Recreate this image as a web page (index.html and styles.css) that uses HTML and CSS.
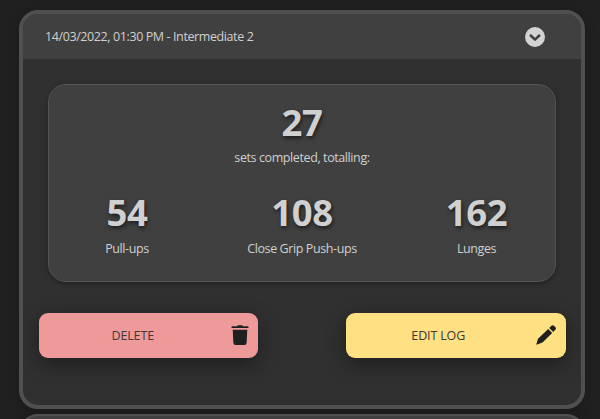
FILE: index.html
```html
<!DOCTYPE html>
<html lang="en">
<head>
<meta charset="utf-8">
<title>Workout log</title>
<link rel="stylesheet" href="styles.css">
</head>
<body>
<main class="logs">
  <article class="log">
    <header class="log-header">
      <span class="log-title">14/03/2022, 01:30 PM - Intermediate 2</span>
      <svg class="chevron" viewBox="0 0 20 20"><circle cx="10" cy="10" r="10" fill="#d3d3d3"/><path d="M5.700 8.500 10 12.600l4.300-4.100" fill="none" stroke="#404040" stroke-width="2.500" stroke-linecap="round" stroke-linejoin="round"/></svg>
    </header>
    <section class="summary">
      <div class="stat total"><strong>27</strong><span>sets completed, totalling:</span></div>
      <div class="stats">
        <div class="stat"><strong>54</strong><span>Pull-ups</span></div>
        <div class="stat"><strong>108</strong><span>Close Grip Push-ups</span></div>
        <div class="stat"><strong>162</strong><span>Lunges</span></div>
      </div>
    </section>
    <div class="actions">
      <button class="button delete"><span>DELETE</span>
        <svg viewBox="0 0 20 22"><path d="M2.500 2.200H7L8 1.200h4l1 1h4.500q1 0 1 .8v1h-17V3q0-.8 1-.8zM2.700 5.800h14.600L16.600 19q-.15 2-2.100 2h-9q-1.950 0-2.100-2z" fill="#202020"/></svg>
      </button>
      <button class="button edit"><span>EDIT LOG</span>
        <svg viewBox="0 0 20 22"><path d="M13.200 4 15.400 1.800q1.300-1.300 2.600 0l1.300 1.300q1.300 1.300 0 2.600L17.200 7.900zM12.200 5l4 3.900L6.500 18.500 1.200 20.600q-1 .3-.8-.7L2 14.800z" fill="#202020"/></svg>
      </button>
    </div>
  </article>
  <article class="log next"></article>
</main>
</body>
</html>
```
FILE: styles.css
```css
* { box-sizing: border-box; }
body {
  margin: 0;
  background: #202020;
  color: #d0d0d0;
  font: 12.5px/18px "Open Sans", "Noto Sans", sans-serif;
}
.logs {
  display: flex;
  flex-direction: column;
  gap: 5px;
  height: 419px;
  padding: 10.4px 15px 0 19px;
  overflow: hidden;
}
.log {
  flex: none;
  height: 398.6px;
  border: 4px solid #505050;
  border-radius: 19px;
  background: #303030;
  overflow: hidden;
  box-shadow: 0 2px 12px rgba(0, 0, 0, .22);
}
.next {
  height: 40px;
  border-width: 2px;
  background: #404040;
}
.log-header {
  display: flex;
  align-items: center;
  justify-content: space-between;
  height: 44.6px;
  padding: 0 36px 0 22px;
  background: #404040;
}
.log-title { letter-spacing: -.4px; }
.chevron { width: 20px; height: 20px; }
.summary {
  height: 198px;
  margin: 25px 25px 0;
  padding-top: 15px;
  border: 1px solid #545454;
  border-radius: 18px;
  background: #404040;
  box-shadow: 0 2px 5px rgba(0, 0, 0, .3);
}
.stat {
  display: flex;
  flex-direction: column;
  align-items: center;
}
.stat strong {
  font: bold 36.5px/46px "Open Sans", "Noto Sans", sans-serif;
  letter-spacing: -.4px;
  text-shadow: 1px 2px 4px rgba(0, 0, 0, .6);
}
.total strong { margin: -1px 0 1px; }
.stat span {
  margin-top: 3px;
  letter-spacing: -.4px;
}
.stats {
  display: grid;
  grid-template-columns: 156px 194px 155px;
  margin-top: 23px;
}
.stats strong { margin: -1px 0 1px; }
.stats span { margin-top: 4px; }
.actions {
  display: flex;
  justify-content: space-between;
  padding: 31px 15.5px 0;
}
.button {
  display: grid;
  grid-template-columns: 1fr 20px;
  align-items: center;
  width: 219.5px;
  height: 45px;
  padding: 0 8px 0 10px;
  border: 0;
  border-radius: 9px;
  color: #403838;
  font: inherit;
  letter-spacing: -.15px;
  box-shadow: 0 6px 20px rgba(0, 0, 0, .4);
}
.button span { padding: 1px 13px 0 0; }
.button svg { width: 20px; height: 22px; }
.delete { background: #ef9a9a; }
.edit {
  padding: 0 10px 0 8px;
  background: #ffe082;
}
```
